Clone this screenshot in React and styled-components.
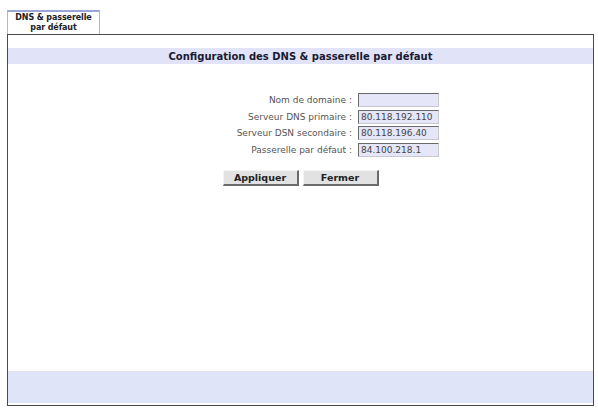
import React from 'react';
import styled, { createGlobalStyle } from 'styled-components';

const Global = createGlobalStyle`
  html, body {
    margin: 0;
    padding: 0;
    background: #fff;
  }
  body {
    font-family: "DejaVu Sans", Verdana, sans-serif;
  }
`;

const Page = styled.div`
  width: 598px;
  height: 409px;
  box-sizing: border-box;
  padding: 10px 4px 3px 7px;
  display: flex;
  flex-direction: column;
`;

const Tabs = styled.div`
  display: flex;
`;

const Tab = styled.div`
  width: 93px;
  box-sizing: border-box;
  border: 1px solid #b8b8c0;
  border-top: 2px solid #9aa6d8;
  border-bottom: none;
  padding: 1px 0 1px;
  font-size: 8px;
  line-height: 10px;
  font-weight: bold;
  color: #222;
  text-align: center;
  letter-spacing: -0.1px;
`;

const Frame = styled.div`
  flex: 1;
  display: flex;
  flex-direction: column;
  border: 1px solid #4a4a4a;
  padding-bottom: 2px;
`;

const TitleBar = styled.div`
  margin-top: 13px;
  height: 16px;
  background: #e1e4f8;
  display: flex;
  align-items: center;
  justify-content: center;
  font-size: 10px;
  font-weight: bold;
  color: #1a1a33;
`;

const Form = styled.div`
  margin-top: 29px;
  display: grid;
  grid-template-columns: 344px 81px;
  column-gap: 6px;
  row-gap: 2.5px;
  align-items: center;
`;

const Label = styled.label`
  text-align: right;
  font-size: 9px;
  color: #555;
  white-space: nowrap;
`;

const Field = styled.input`
  width: 81px;
  height: 14px;
  box-sizing: border-box;
  margin: 0;
  padding: 0 2px;
  border: 1px solid #c8c8d0;
  border-top-color: #6a6a6a;
  border-left-color: #6a6a6a;
  background: #e5e6f8;
  font-family: "DejaVu Sans", Verdana, sans-serif;
  font-size: 9px;
  color: #444;
  outline: none;
`;

const Buttons = styled.div`
  margin-top: 13px;
  display: flex;
  justify-content: center;
  gap: 4px;
`;

const Button = styled.button`
  width: 76px;
  height: 16px;
  box-sizing: border-box;
  margin: 0;
  padding: 0;
  background: #e2e2e2;
  border: 1px solid #f4f4f4;
  border-right: 2px solid #6a6a6a;
  border-bottom: 2px solid #6a6a6a;
  font-family: "DejaVu Sans", Verdana, sans-serif;
  font-size: 9.5px;
  font-weight: bold;
  color: #222;
`;

const Footer = styled.div`
  margin-top: auto;
  height: 31px;
  background: #e0e4f8;
  border-top: 1px solid #e6e2ee;
`;

const fields = [
  ['Nom de domaine :', ''],
  ['Serveur DNS primaire :', '80.118.192.110'],
  ['Serveur DSN secondaire :', '80.118.196.40'],
  ['Passerelle par défaut :', '84.100.218.1'],
];

export default function App() {
  return (
    <>
      <Global />
      <Page>
        <Tabs>
          <Tab>DNS &amp; passerelle<br />par défaut</Tab>
        </Tabs>
        <Frame>
          <TitleBar>Configuration des DNS &amp; passerelle par défaut</TitleBar>
          <Form>
            {fields.map(([label, value]) => (
              <React.Fragment key={label}>
                <Label>{label}</Label>
                <Field defaultValue={value} />
              </React.Fragment>
            ))}
          </Form>
          <Buttons>
            <Button>Appliquer</Button>
            <Button>Fermer</Button>
          </Buttons>
          <Footer />
        </Frame>
      </Page>
    </>
  );
}
